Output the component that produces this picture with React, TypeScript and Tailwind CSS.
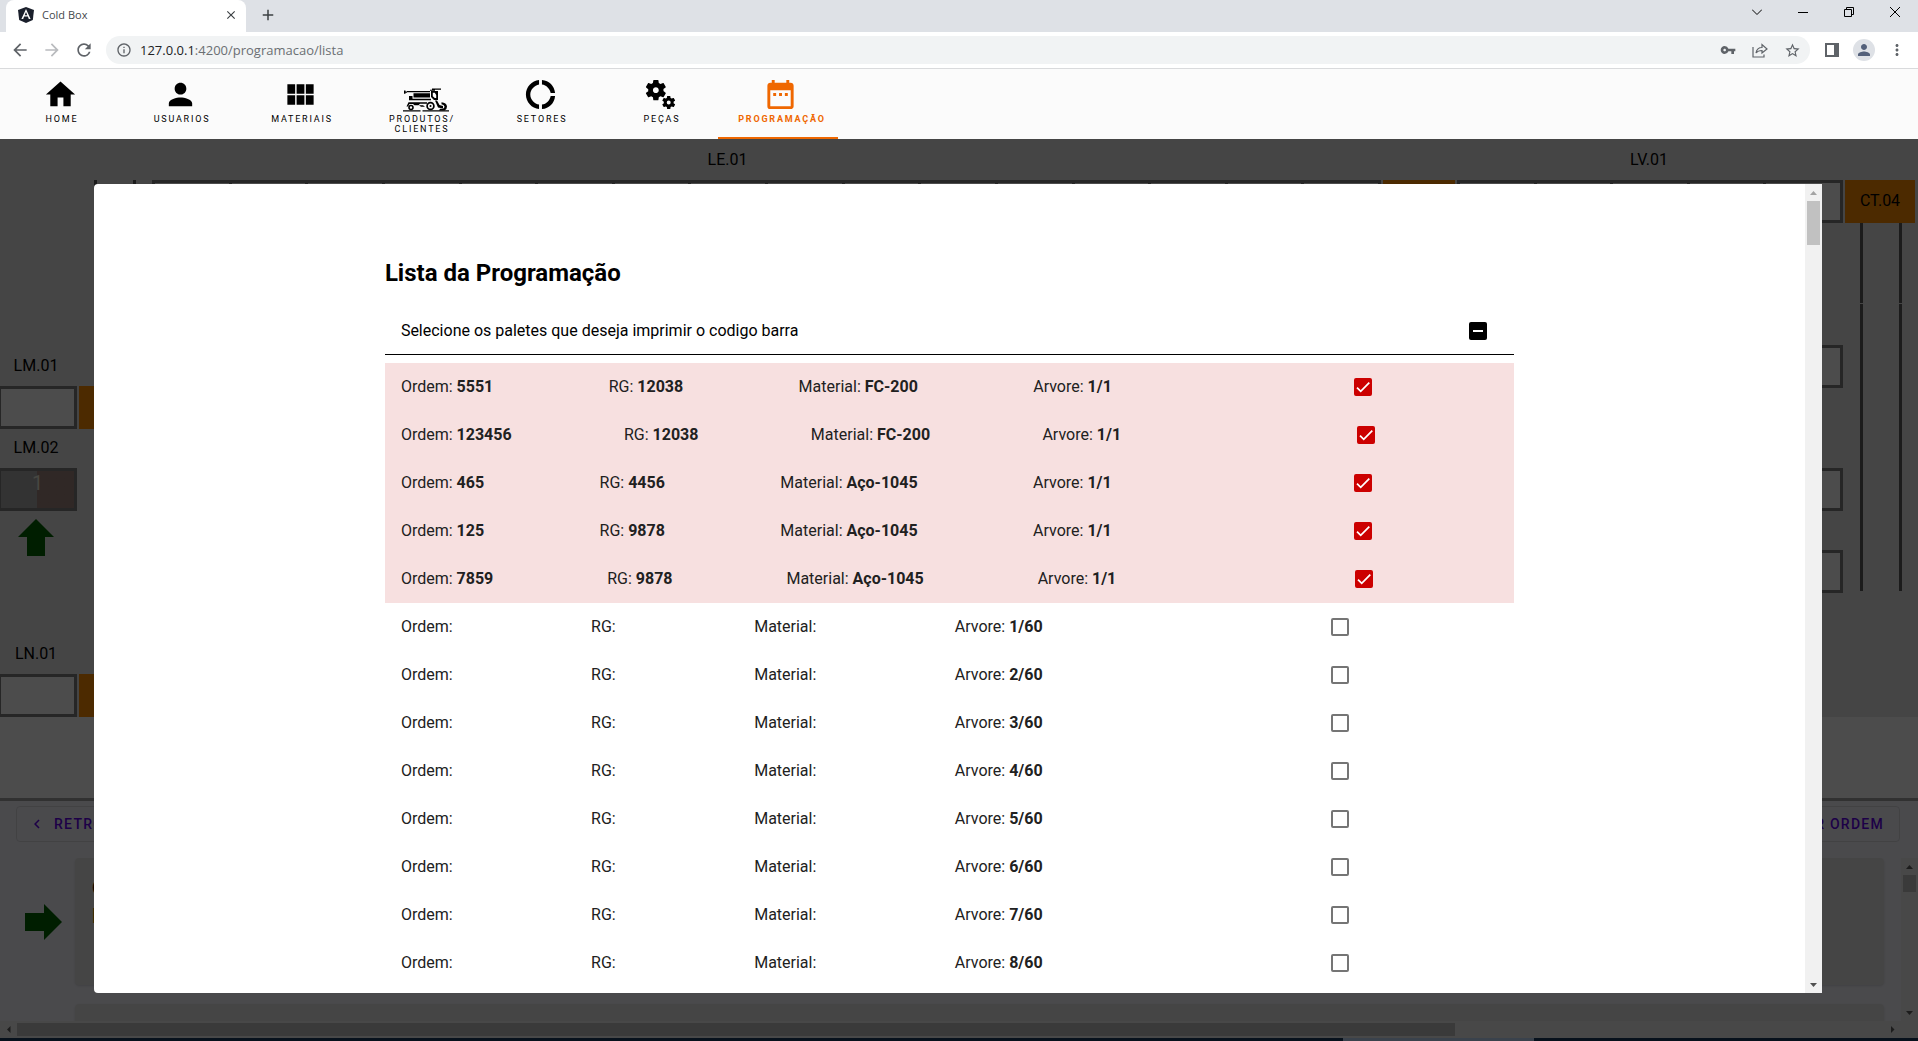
import { useEffect, useRef, useState } from 'react';
import type { ReactNode } from 'react';
import {
  MdArrowBack,
  MdArrowForward,
  MdChevronLeft,
  MdClose,
  MdAdd,
  MdDateRange,
  MdDonutLarge,
  MdHome,
  MdInfoOutline,
  MdMiscellaneousServices,
  MdMoreVert,
  MdPerson,
  MdRefresh,
  MdStarBorder,
  MdViewModule,
  MdVpnKey,
} from 'react-icons/md';

type Palete = { ordem: string; rg: string; material: string; arvore: string; marcado: boolean };

const programados: Palete[] = [
  { ordem: '5551', rg: '12038', material: 'FC-200', arvore: '1/1', marcado: true },
  { ordem: '123456', rg: '12038', material: 'FC-200', arvore: '1/1', marcado: true },
  { ordem: '465', rg: '4456', material: 'Aço-1045', arvore: '1/1', marcado: true },
  { ordem: '125', rg: '9878', material: 'Aço-1045', arvore: '1/1', marcado: true },
  { ordem: '7859', rg: '9878', material: 'Aço-1045', arvore: '1/1', marcado: true },
];

const vazios: Palete[] = Array.from({ length: 8 }, (_, i) => ({
  ordem: '',
  rg: '',
  material: '',
  arvore: `${i + 1}/60`,
  marcado: false,
}));

function Colheitadeira() {
  return (
    <svg viewBox="0 0 46 24" className="w-[46px] h-6" fill="currentColor" aria-hidden="true">
      {/* teto, cano e cabine */}
      <path d="M29 .5h9v1.200h-9zM27 1.700h5v1h-5zM1 2.500h1.500v1H4v1.200H2.500v1H1zM4 3h23v1.200H4z" />
      <path fillRule="evenodd" d="M28 3h7v9h-4l-3-3zM29.800 4.800v3.400l2 1.800h1.400V7l-1.400-2.200z" />
      {/* corpo */}
      <path d="M10.500 5.300h16.500v4.200H10.500zM6 8h3.500v2.700H28V12.300H6z" />
      <path d="M5.500 14.300H24v1.400h-7l-1.500 1.500h-4L10 16H6.500L5 18.500H3.500zM16 17.200h4l2 1.600h-4z" />
      <path d="M32 12.500h2l2.500 4.500 3.500 1v2.500l-5-1z" />
      <path d="M38.500 14.200q5 .3 5.500 4.300 0 3-2.500 4h-5.500l1-1.800h3q1.500-.7 1.500-2.200-.5-2-3-2.300z" />
      <circle cx="8" cy="19.500" r="2" fill="none" stroke="currentColor" strokeWidth="1.600" />
      <circle cx="27.500" cy="18" r="3.400" fill="none" stroke="currentColor" strokeWidth="1.700" />
      <circle cx="27.500" cy="18" r="1" />
      <path d="M0 22.200h17.500v1.300H0zM19.500 22.200H46v1.300H19.500z" />
    </svg>
  );
}

const menu: { label: string; icon: ReactNode; ativo?: boolean }[] = [
  { label: 'HOME', icon: <MdHome className="size-[35px]" /> },
  { label: 'USUARIOS', icon: <MdPerson className="size-[35px]" /> },
  { label: 'MATERIAIS', icon: <MdViewModule className="size-[35px]" /> },
  { label: 'PRODUTOS/ CLIENTES', icon: <div className="pl-3"><Colheitadeira /></div> },
  { label: 'SETORES', icon: <MdDonutLarge className="size-[35px]" /> },
  { label: 'PEÇAS', icon: <MdMiscellaneousServices className="size-[35px]" /> },
  { label: 'PROGRAMAÇÃO', icon: <MdDateRange className="size-[35px]" />, ativo: true },
];

function Navegador() {
  return (
    <header className="font-['Open_Sans',sans-serif]">
      <div className="h-8 bg-[#dee1e6] flex justify-between">
        <div className="flex items-center pl-[6px]">
          <div className="w-60 h-8 bg-white rounded-t-lg flex items-center pl-3 pr-2 pb-[2px]">
            <svg viewBox="0 0 16 16" className="size-4" aria-hidden="true">
              <path d="M8 0l8 3-1.200 10L8 16l-6.800-3L0 3z" fill="#1a1f2b" />
              <path d="M8 2l4.600 10h-1.800l-.9-2.400H6.100L5.200 12H3.400zM8 5L6.700 8.200h2.600z" fill="#fff" />
            </svg>
            <span className="text-[11px] text-[#45494d] ml-2 flex-1">Cold Box</span>
            <button aria-label="Fechar guia" className="text-[#3c4043]"><MdClose className="size-[14px]" /></button>
          </div>
          <button aria-label="Nova guia" className="ml-[13px] pb-[2px] text-[#3c4043]"><MdAdd className="size-[18px]" /></button>
        </div>
        <div className="flex items-center h-6 gap-9 pr-[18px] text-black">
          <button aria-label="Pesquisar guias">
            <svg viewBox="0 0 10 10" className="size-[10px]" fill="none" stroke="currentColor"><path d="M0 2.500l5 5 5-5" /></svg>
          </button>
          <button aria-label="Minimizar">
            <svg viewBox="0 0 10 10" className="size-[10px]" fill="none" stroke="currentColor"><path d="M0 5.500h10" /></svg>
          </button>
          <button aria-label="Restaurar">
            <svg viewBox="0 0 10 10" className="size-[10px]" fill="none" stroke="currentColor"><path d="M.5 2.500h7v7h-7zM2.500 2.500v-2h7v7h-2" /></svg>
          </button>
          <button aria-label="Fechar">
            <svg viewBox="0 0 10 10" className="size-[10px]" fill="none" stroke="currentColor"><path d="M0 0l10 10M10 0L0 10" /></svg>
          </button>
        </div>
      </div>
      <div className="h-[37px] bg-white border-b border-[#d9dadc] flex items-center pl-[10px] pr-3 text-[#5f6368]">
        <button aria-label="Voltar"><MdArrowBack className="size-5" /></button>
        <button aria-label="Avançar" className="ml-3 text-[#b9bbbe]"><MdArrowForward className="size-5" /></button>
        <button aria-label="Recarregar" className="ml-3"><MdRefresh className="size-5" /></button>
        <div className="ml-3 h-7 flex-1 rounded-full bg-[#f1f3f4] flex items-center pl-[10px] pr-[9px]">
          <MdInfoOutline className="size-4" />
          <label htmlFor="url" className="ml-2 pt-px text-[13px] text-[#202124]">127.0.0.1</label>
          <input
            id="url"
            defaultValue=":4200/programacao/lista"
            className="flex-1 pt-px text-[13px] text-[#6b6f73] bg-transparent outline-none"
          />
          <button aria-label="Senhas"><MdVpnKey className="size-4" /></button>
          <button aria-label="Compartilhar" className="ml-4">
            <svg viewBox="0 0 16 16" className="size-4" fill="none" stroke="currentColor" strokeWidth="1.200">
              <path d="M1 5v10h11v-2.500M4 11q1-5.500 6-5.500V2.500l5 4.500-5 4V8.500Q6 8.500 4 11z" />
            </svg>
          </button>
          <button aria-label="Favoritos" className="ml-4"><MdStarBorder className="size-[17px]" /></button>
        </div>
        <button aria-label="Painel lateral" className="ml-[15px]">
          <svg viewBox="0 0 14 14" className="size-[14px]" fill="currentColor"><path fillRule="evenodd" d="M0 0h14v14H0zM2 2v10h7V2z" /></svg>
        </button>
        <button aria-label="Perfil" className="ml-[14px] size-[22px] rounded-full bg-[#dee1e6] flex items-center justify-center text-[#53607a]">
          <MdPerson className="size-[18px]" />
        </button>
        <button aria-label="Menu" className="ml-[13px]"><MdMoreVert className="size-[18px]" /></button>
      </div>
    </header>
  );
}

function MenuPrincipal() {
  return (
    <nav className="h-[70px] bg-[#fbfbfb] text-black">
      <div className="h-full flex -ml-[2px]">
        {menu.map((item) => (
          <a
            key={item.label}
            href="#"
            className={
              item.ativo
                ? 'w-[120px] pl-4 pr-3 pt-2 flex flex-col items-center text-[#ef6700] font-bold border-b-2 border-[#ef6700]'
                : 'w-[120px] pl-6 pr-5 pt-2 flex flex-col items-center'
            }
          >
            <span className="h-[35px] flex items-end">{item.icon}</span>
            <span className="text-[9px] leading-[10px] tracking-[0.2em] text-center mt-[2px] pl-1">{item.label}</span>
          </a>
        ))}
      </div>
    </nav>
  );
}

function Celula({ children }: { children?: ReactNode }) {
  return <div className="h-[43px] w-[77px] bg-white border-[3px] border-l border-[#808080]">{children}</div>;
}

function Linha({ celulas }: { celulas: number }) {
  return (
    <div className="flex h-[43px] flex-1 bg-white border-y-[3px] border-l-[3px] border-[#808080]">
      {Array.from({ length: celulas }, (_, i) => (
        <div key={i} className="flex-1 border-r-[3px] border-[#808080]" />
      ))}
    </div>
  );
}

function Trilho({ className }: { className: string }) {
  return <div className={`w-[42px] border-x-[3px] border-[#5c5c5c] ${className}`} />;
}

function Quadro() {
  return (
    <section className="bg-[#e8e8e8] text-black text-base leading-6">
      <div className="flex h-[41px] items-center pr-[75px]">
        <div className="flex-[1455] text-center">LE.01</div>
        <div className="flex-[388] text-center">LV.01</div>
      </div>
      <div className="flex gap-[2px] pr-[3px]">
        <div className="w-[150px] pl-[94px]"><Trilho className="h-[43px]" /></div>
        <div className="flex-[1229] flex"><Linha celulas={16} /></div>
        <div className="w-[72px] bg-[#ff8c00]" />
        <div className="flex-[386] flex"><Linha celulas={5} /></div>
        <div className="w-[70px] pb-[2px] bg-[#ff8c00] flex items-center justify-center">CT.04</div>
      </div>
      <div className="flex justify-between">
        <div className="pt-[131px]">
          <div className="w-[72px] text-center mb-2">LM.01</div>
          <div className="flex gap-[2px]">
            <Celula />
            <div className="w-[70px] bg-[#ff8c00]" />
          </div>
          <div className="w-[72px] text-center mt-[7px] mb-2">LM.02</div>
          <Celula>
            <div className="h-full flex items-start justify-center bg-linear-to-r from-[#aaaaaa] from-50% to-[#a0857f] to-50% text-xl leading-6 text-[#eeeedd]">1</div>
          </Celula>
          <svg viewBox="0 0 36 37" className="w-9 h-[37px] ml-[18px] mt-2" fill="#006400" aria-hidden="true">
            <path d="M18 0l18 18h-9v19H9V18H0z" />
          </svg>
          <div className="w-[72px] text-center mt-[86px] mb-2">LN.01</div>
          <div className="flex gap-[2px]">
            <Celula />
            <div className="w-[70px] bg-[#ff8c00]" />
          </div>
        </div>
        <div className="flex pr-4">
          <div className="pt-[122px] mr-[17px]">
            <Celula />
            <div className="mt-20"><Celula /></div>
            <div className="mt-[39px]"><Celula /></div>
          </div>
          <div>
            <Trilho className="h-20" />
            <Trilho className="mt-px h-[287px]" />
          </div>
        </div>
      </div>
    </section>
  );
}

function Ordens() {
  return (
    <section className="flex-1 min-h-0 bg-[#f8f8ff] border-t-[3px] border-[#a4a4a4] flex flex-col">
      <div className="flex justify-between pt-[5px] pl-4 pr-[18px] text-sm font-medium tracking-[0.09em] text-[#6200ee]">
        <button className="h-9 border border-[#dddde2] rounded flex items-center pl-[11px] pr-[15px]">
          <MdChevronLeft className="size-[18px] mr-2" />
          RETROCEDER
        </button>
        <button className="h-9 border border-[#dddde2] rounded px-[15px]">FINALIZAR ORDEM</button>
      </div>
      <div className="flex-1 min-h-0 mt-4 flex">
        <div className="flex-1 overflow-hidden pr-[17px]">
          <div className="flex items-center">
            <svg viewBox="0 0 37 36" className="w-[37px] h-9 ml-[25px] mr-[13px]" fill="#006400" aria-hidden="true">
              <path d="M37 18L19 36v-9H0V9h19V0z" />
            </svg>
            <div className="flex-1 h-[127px] bg-[#e8e8e8] rounded shadow px-[17px] pt-4 font-bold text-xl">
              <p className="text-[#401800]">Ordem: 5551</p>
              <p className="text-[#c08000]">Material: FC-200</p>
            </div>
          </div>
          <div className="ml-[75px] mt-[19px] h-32 bg-[#e8e8e8] rounded shadow" />
        </div>
        <div className="w-[17px] bg-[#f1f1f1] flex flex-col items-center text-[#606060]">
          <Seta d="M0 6l3.500-4L7 6z" />
          <div className="w-[13px] h-[17px] bg-[#c1c1c1]" />
          <div className="flex-1" />
          <Seta d="M0 2l3.500 4L7 2z" />
        </div>
      </div>
      <div className="h-[17px] bg-[#f1f1f1] flex items-center text-[#606060] pr-[17px]">
        <Seta d="M5.500 0L2 3.500 5.500 7z" />
        <div className="flex-1"><div className="h-[13px] w-[77%] bg-[#c1c1c1]" /></div>
        <Seta d="M2 0l3.500 3.500L2 7z" />
      </div>
    </section>
  );
}

function Seta({ d }: { d: string }) {
  return (
    <svg viewBox="-5 -5 17 17" className="size-[17px] shrink-0" fill="currentColor" aria-hidden="true">
      <path d={d} />
    </svg>
  );
}

function Item({ palete }: { palete: Palete }) {
  const [marcado, setMarcado] = useState(palete.marcado);

  return (
    <li className={marcado ? 'bg-[#f7e0e0]' : ''}>
      <label className="h-12 px-4 flex items-center justify-between text-[#212121]">
        <span>Ordem: <b>{palete.ordem}</b></span>
        <span>RG: <b>{palete.rg}</b></span>
        <span>Material: <b>{palete.material}</b></span>
        <span>Arvore: <b>{palete.arvore}</b></span>
        <span />
        <span className="w-10 flex justify-center">
          <span className="grid size-[18px]">
            <input
              type="checkbox"
              checked={marcado}
              onChange={() => setMarcado(!marcado)}
              className="col-start-1 row-start-1 appearance-none size-[18px] rounded-xs border-2 border-[#757575] checked:bg-[#cc0000] checked:border-[#cc0000]"
            />
            {marcado && (
              <svg viewBox="0 0 24 24" className="col-start-1 row-start-1 size-[14px] m-[2px] pointer-events-none" fill="none" stroke="#fff" strokeWidth="3">
                <path d="M1.730 12.910L8.100 19.280 22.790 4.590" />
              </svg>
            )}
          </span>
        </span>
        <span />
      </label>
    </li>
  );
}

function ListaProgramacao() {
  const todos = useRef<HTMLInputElement>(null);

  useEffect(() => {
    if (todos.current) todos.current.indeterminate = true;
  }, []);

  return (
    <div role="dialog" aria-labelledby="titulo" className="absolute top-[45px] bottom-[45px] left-[94px] right-24 bg-white rounded-l flex overflow-hidden text-black">
      <div className="flex-1 overflow-hidden">
        <div className="w-[66%] mx-auto pt-[73px]">
          <h2 id="titulo" className="text-2xl leading-8 font-bold">Lista da Programação</h2>
          <label className="mt-4 h-[50px] px-4 pt-[2px] flex items-center justify-between border-b border-black">
            Selecione os paletes que deseja imprimir o codigo barra
            <span className="w-10 flex justify-center">
              <span className="grid size-[18px]">
                <input ref={todos} type="checkbox" className="col-start-1 row-start-1 appearance-none size-[18px] rounded-xs bg-black" />
                <span className="col-start-1 row-start-1 w-[10px] h-[2px] m-auto bg-white pointer-events-none" />
              </span>
            </span>
          </label>
          <ul className="py-2">
            {[...programados, ...vazios].map((palete, i) => (
              <Item key={i} palete={palete} />
            ))}
          </ul>
        </div>
      </div>
      <div className="w-[17px] bg-[#f1f1f1] flex flex-col items-center">
        <span className="text-[#a3a3a3] flex"><Seta d="M0 6l3.500-4L7 6z" /></span>
        <div className="w-[13px] h-11 bg-[#c1c1c1]" />
        <div className="flex-1" />
        <span className="text-[#505050] flex"><Seta d="M0 2l3.500 4L7 2z" /></span>
      </div>
    </div>
  );
}

export default function App() {
  return (
    <div className="h-screen flex flex-col overflow-hidden font-[Roboto,sans-serif]">
      <Navegador />
      <MenuPrincipal />
      <main className="relative flex-1 min-h-0 flex flex-col bg-white">
        <Quadro />
        <div className="h-[81px]" />
        <Ordens />
        <div className="absolute inset-0 bg-black/70" />
        <ListaProgramacao />
      </main>
      <footer className="h-[3px] bg-[#07111c] flex">
        <div className="w-[70%]" />
        <div className="w-[10%] bg-[#3a424c]" />
      </footer>
    </div>
  );
}
